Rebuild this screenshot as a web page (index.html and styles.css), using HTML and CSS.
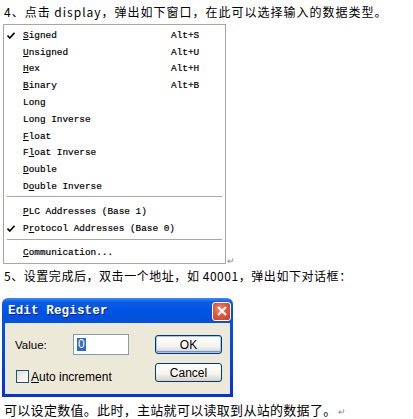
FILE: index.html
```html
<!DOCTYPE html>
<html>
<head>
<meta charset="utf-8">
<link rel="stylesheet" href="styles.css">
</head>
<body>
<div class="page">
  <p class="line l1">4、点击 display，弹出如下窗口，在此可以选择输入的数据类型。</p>
  <div class="menu-wrap">
    <div class="menu">
      <div class="item"><span class="chk"><svg width="8" height="7" viewBox="0 0 8 7"><path d="M0.5 3.5 L2.8 6 L7.5 0.8" fill="none" stroke="#000" stroke-width="1.6"/></svg></span><span class="lbl"><u>S</u>igned</span><span class="key">Alt+S</span></div>
      <div class="item"><span class="chk"></span><span class="lbl"><u>U</u>nsigned</span><span class="key">Alt+U</span></div>
      <div class="item"><span class="chk"></span><span class="lbl"><u>H</u>ex</span><span class="key">Alt+H</span></div>
      <div class="item"><span class="chk"></span><span class="lbl"><u>B</u>inary</span><span class="key">Alt+B</span></div>
      <div class="item"><span class="chk"></span><span class="lbl">Long</span></div>
      <div class="item"><span class="chk"></span><span class="lbl">Long Inverse</span></div>
      <div class="item"><span class="chk"></span><span class="lbl"><u>F</u>loat</span></div>
      <div class="item"><span class="chk"></span><span class="lbl">F<u>l</u>oat Inverse</span></div>
      <div class="item"><span class="chk"></span><span class="lbl"><u>D</u>ouble</span></div>
      <div class="item"><span class="chk"></span><span class="lbl">D<u>o</u>uble Inverse</span></div>
      <div class="sep"></div>
      <div class="item"><span class="chk"></span><span class="lbl"><u>P</u>LC Addresses (Base 1)</span></div>
      <div class="item"><span class="chk"><svg width="8" height="7" viewBox="0 0 8 7"><path d="M0.5 3.5 L2.8 6 L7.5 0.8" fill="none" stroke="#000" stroke-width="1.6"/></svg></span><span class="lbl">P<u>r</u>otocol Addresses (Base 0)</span></div>
      <div class="sep sep2"></div>
      <div class="item"><span class="chk"></span><span class="lbl"><u>C</u>ommunication...</span></div>
    </div>
    <span class="ret">↵</span>
  </div>
  <p class="line l2">5、设置完成后，双击一个地址，如 40001，弹出如下对话框：</p>
  <div class="dialog">
    <div class="titlebar">
      <span class="title">Edit Register</span>
      <span class="close"><svg width="10" height="10" viewBox="0 0 10 10"><path d="M1 1 L9 9 M9 1 L1 9" stroke="#fff" stroke-width="2.2"/></svg></span>
    </div>
    <div class="dbody">
      <div class="leftcol">
        <div class="row1">
          <span class="vlabel">Value:</span>
          <span class="input"><span class="sel">0</span></span>
        </div>
        <div class="row2">
          <span class="cbox"></span>
          <span class="clabel"><u>A</u>uto increment</span>
        </div>
      </div>
      <div class="rightcol">
        <span class="btn btn-def">OK</span>
        <span class="btn">Cancel</span>
      </div>
    </div>
  </div>
  <p class="line l3">可以设定数值。此时，主站就可以读取到从站的数据了。<span class="ret2">↵</span></p>
</div>
</body>
</html>
```
FILE: styles.css
```css
html, body {
  margin: 0;
  padding: 0;
  background: #fff;
}
.page {
  width: 413px;
  height: 419px;
  overflow: hidden;
  font-family: "Noto Sans CJK SC", "Noto Sans", sans-serif;
  color: #000;
}
.line {
  margin: 0;
  padding-left: 4px;
  white-space: nowrap;
}
.l1 {
  font-size: 12px;
  line-height: 24px;
  height: 25px;
  letter-spacing: 1px;
}
.menu-wrap {
  display: flex;
  align-items: flex-end;
  padding-left: 3px;
  height: 239px;
}
.menu {
  width: 221px;
  height: 236px;
  border: 1px solid #a8a8a0;
  background: #fff;
  padding-top: 2px;
  box-sizing: content-box;
  font-family: "Liberation Mono", monospace;
  font-size: 9.4px;
  color: #000;
  -webkit-text-stroke: 0.2px #000;
}
.item {
  display: flex;
  align-items: center;
  height: 16.8px;
}
.chk {
  width: 16px;
  padding-left: 3px;
  display: flex;
  align-items: center;
}
.lbl {
  flex: 1;
}
.key {
  width: 54px;
}
.sep {
  height: 7.9px;
  position: relative;
}
.sep::before {
  content: "";
  position: absolute;
  left: 3px;
  right: 3px;
  top: 1px;
  border-top: 1px solid #a8a8a0;
  border-bottom: 1px solid #fff;
}
.sep2 {
  height: 7.7px;
}
.sep2::before {
  top: 3px;
}
.ret {
  font-size: 9px;
  color: #888;
  line-height: 8px;
  margin-left: 1px;
  margin-bottom: -1px;
}
.l2 {
  font-size: 12px;
  line-height: 24px;
  height: 24px;
  letter-spacing: 0.55px;
  margin-bottom: 10px;
}
.dialog {
  margin-left: 2px;
  width: 231px;
  height: 99px;
  border-radius: 6px 6px 0 0;
  display: flex;
  flex-direction: column;
  box-sizing: border-box;
  padding: 0 3px 3px 3px;
  background: linear-gradient(to bottom, #3d8cf5 0px, #0a5de6 4px, #0054e3 12px, #0350dc 22px, #0054e3 25px, #0831d9 100%);
}
.titlebar {
  height: 25px;
  display: flex;
  align-items: center;
  justify-content: space-between;
  padding: 0 0 0 3px;
}
.title {
  font-family: "Liberation Mono", monospace;
  font-weight: bold;
  font-size: 12.6px;
  color: #fff;
  letter-spacing: 0.1px;
  text-shadow: 1px 1px 0 #0a1e8c;
}
.close {
  width: 19px;
  height: 19px;
  margin-right: -1px;
  margin-top: 1px;
  border: 1px solid #fff;
  border-radius: 3px;
  background: radial-gradient(circle at 40% 35%, #f28a6c 0%, #e0583a 45%, #c8401f 100%);
  display: flex;
  align-items: center;
  justify-content: center;
  box-sizing: border-box;
}
.dbody {
  flex: 1;
  background: #ece9d8;
  display: flex;
  justify-content: space-between;
  padding: 11px 8px 0 10px;
  font-family: "Liberation Sans", Arial, sans-serif;
  font-size: 11px;
  color: #000;
}
.leftcol {
  display: flex;
  flex-direction: column;
}
.row1 {
  display: flex;
  align-items: center;
  height: 21px;
}
.vlabel {
  width: 58px;
  font-size: 11.5px;
}
.input {
  width: 56px;
  height: 21px;
  box-sizing: border-box;
  border: 1px solid #7f9db9;
  background: #fff;
  display: flex;
  align-items: center;
  padding-left: 3px;
}
.sel {
  background: #316ac5;
  color: #fff;
  font-size: 12px;
  line-height: 13px;
  padding: 0 1px;
}
.row2 {
  display: flex;
  align-items: center;
  margin-top: 15px;
  height: 13px;
}
.cbox {
  width: 13px;
  height: 13px;
  box-sizing: border-box;
  border: 1px solid #1c5180;
  background: linear-gradient(135deg, #dcdcd7 0%, #f5f5f1 60%, #fff 100%);
  margin-left: 1px;
  margin-right: 2px;
}
.clabel {
  font-size: 12px;
}
.rightcol {
  display: flex;
  flex-direction: column;
  gap: 9px;
  padding-top: 1px;
}
.btn {
  width: 67px;
  height: 19px;
  box-sizing: border-box;
  border: 1px solid #003c74;
  border-radius: 3px;
  background: linear-gradient(to bottom, #fff 0%, #f4f3ee 60%, #d6d0c5 100%);
  display: flex;
  align-items: center;
  justify-content: center;
  font-size: 12px;
}
.btn-def {
  box-shadow: inset 0 0 0 1px #a8c4ef, inset 0 -1px 0 1px #6a95e0;
}
.l3 {
  font-size: 13px;
  line-height: 26px;
  height: 26px;
  letter-spacing: 0.3px;
}
.ret2 {
  font-size: 9px;
  color: #888;
  margin-left: 1px;
}
```
